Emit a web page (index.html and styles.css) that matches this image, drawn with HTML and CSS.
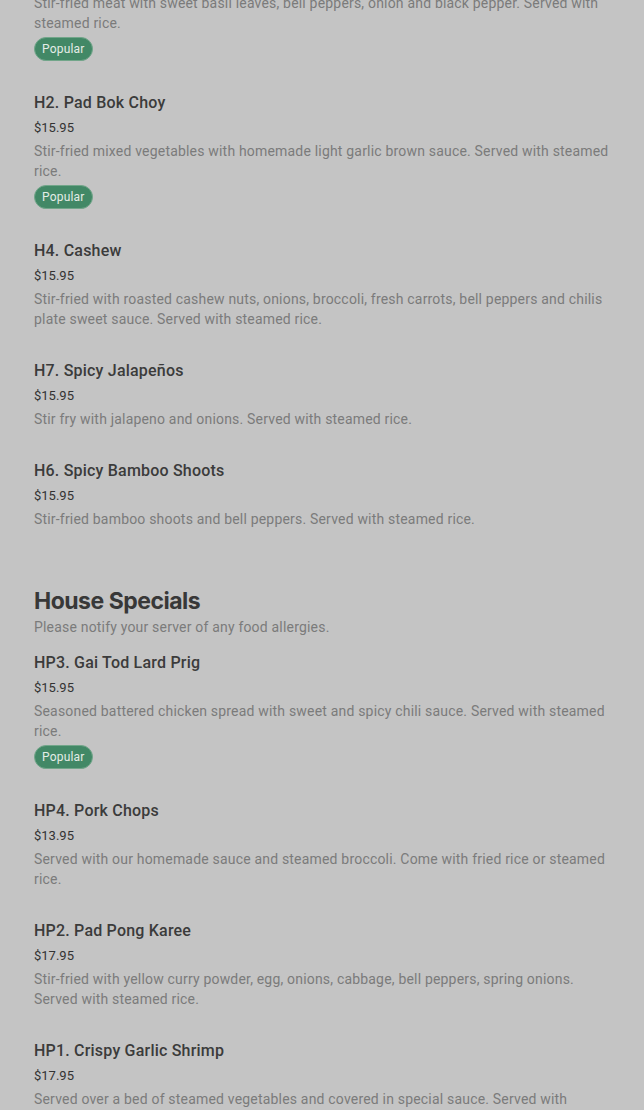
FILE: index.html
```html
<!DOCTYPE html>
<html lang="en">
<head>
<meta charset="utf-8">
<title>Menu</title>
<link rel="stylesheet" href="styles.css">
</head>
<body>
<main class="menu">
  <section class="section first">
    <article class="item">
      <h3 class="item-title">H1. Pad Kra Pao</h3>
      <div class="price">$15.95</div>
      <p class="desc">Stir-fried meat with sweet basil leaves, bell peppers, onion and black pepper. Served with steamed rice.</p>
      <span class="badge">Popular</span>
    </article>
    <article class="item">
      <h3 class="item-title">H2. Pad Bok Choy</h3>
      <div class="price">$15.95</div>
      <p class="desc">Stir-fried mixed vegetables with homemade light garlic brown sauce. Served with steamed rice.</p>
      <span class="badge">Popular</span>
    </article>
    <article class="item">
      <h3 class="item-title">H4. Cashew</h3>
      <div class="price">$15.95</div>
      <p class="desc">Stir-fried with roasted cashew nuts, onions, broccoli, fresh carrots, bell peppers and chilis plate sweet sauce. Served with steamed rice.</p>
    </article>
    <article class="item">
      <h3 class="item-title">H7. Spicy Jalapeños</h3>
      <div class="price">$15.95</div>
      <p class="desc">Stir fry with jalapeno and onions. Served with steamed rice.</p>
    </article>
    <article class="item">
      <h3 class="item-title">H6. Spicy Bamboo Shoots</h3>
      <div class="price">$15.95</div>
      <p class="desc">Stir-fried bamboo shoots and bell peppers. Served with steamed rice.</p>
    </article>
  </section>
  <section class="section">
    <h2 class="section-title">House Specials</h2>
    <p class="section-sub">Please notify your server of any food allergies.</p>
    <article class="item">
      <h3 class="item-title">HP3. Gai Tod Lard Prig</h3>
      <div class="price">$15.95</div>
      <p class="desc">Seasoned battered chicken spread with sweet and spicy chili sauce. Served with steamed rice.</p>
      <span class="badge">Popular</span>
    </article>
    <article class="item">
      <h3 class="item-title">HP4. Pork Chops</h3>
      <div class="price">$13.95</div>
      <p class="desc">Served with our homemade sauce and steamed broccoli. Come with fried rice or steamed rice.</p>
    </article>
    <article class="item">
      <h3 class="item-title">HP2. Pad Pong Karee</h3>
      <div class="price">$17.95</div>
      <p class="desc">Stir-fried with yellow curry powder, egg, onions, cabbage, bell peppers, spring onions. Served with steamed rice.</p>
    </article>
    <article class="item">
      <h3 class="item-title">HP1. Crispy Garlic Shrimp</h3>
      <div class="price">$17.95</div>
      <p class="desc">Served over a bed of steamed vegetables and covered in special sauce. Served with steamed rice.</p>
    </article>
  </section>
</main>
</body>
</html>
```

FILE: styles.css
```css
html, body {
  margin: 0;
  padding: 0;
  background: #c4c4c4;
}
body {
  font-family: Roboto, "Liberation Sans", sans-serif;
  color: #2e2e2e;
  overflow: hidden;
  height: 1110px;
}
.menu {
  padding: 0 30px 0 34px;
  margin-top: -57px;
}
.section {
  display: flex;
  flex-direction: column;
}
.section + .section {
  margin-top: 26px;
}
.item {
  display: flex;
  flex-direction: column;
  align-items: flex-start;
  padding-bottom: 30px;
}
.item-title {
  margin: 0;
  font-size: 16px;
  line-height: 24px;
  font-weight: 500;
  letter-spacing: 0.2px;
  color: #3b3b3b;
}
.price {
  margin-top: 3px;
  font-size: 13px;
  line-height: 20px;
  color: #333333;
}
.desc {
  margin: 3px 0 0;
  font-size: 14px;
  line-height: 20px;
  letter-spacing: 0.19px;
  color: #7b7b7b;
}
.badge {
  margin-top: 4px;
  height: 24px;
  box-sizing: border-box;
  padding: 0 7px;
  border-radius: 12px;
  background: #428866;
  border: 1px solid #72a68a;
  color: #e4ece7;
  font-size: 12px;
  letter-spacing: 0.2px;
  line-height: 22px;
}
.section-title {
  margin: 0;
  font-family: Inter, "Liberation Sans", sans-serif;
  font-size: 23px;
  line-height: 32px;
  font-weight: 700;
  letter-spacing: -0.5px;
  color: #383838;
}
.section-sub {
  margin: 0 0 14px;
  font-size: 14px;
  line-height: 20px;
  letter-spacing: 0.19px;
  color: #7b7b7b;
}
```
